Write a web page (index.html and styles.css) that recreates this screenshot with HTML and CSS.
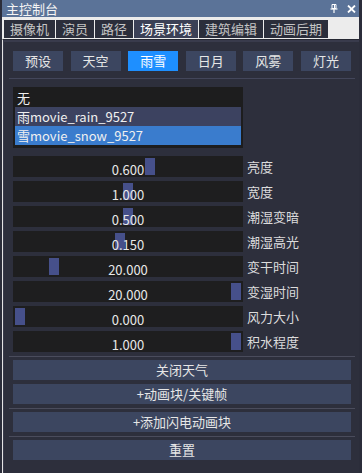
FILE: index.html
```html
<!DOCTYPE html>
<html>
<head>
<meta charset="utf-8">
<link rel="stylesheet" href="styles.css">
</head>
<body>
<div class="window">
  <div class="titlebar">
    <span class="title">主控制台</span>
    <span class="title-icons">
      <svg class="ico" width="8" height="9" viewBox="0 0 8 9"><path d="M2 0.5h4v4h-4z" fill="none" stroke="#fff" stroke-width="1"/><path d="M0.5 5h7" stroke="#fff" stroke-width="1.2"/><path d="M4 5v4" stroke="#fff" stroke-width="1.2"/><path d="M4.5 1v3.5" stroke="#fff" stroke-width="1"/></svg>
      <svg class="ico" width="9" height="8" viewBox="0 0 9 8"><path d="M1 0.5l7 7M8 0.5l-7 7" stroke="#fff" stroke-width="1.8"/></svg>
    </span>
  </div>
  <div class="tabbar">
    <div class="tab">摄像机</div>
    <div class="tab">演员</div>
    <div class="tab">路径</div>
    <div class="tab active">场景环境</div>
    <div class="tab">建筑编辑</div>
    <div class="tab">动画后期</div>
  </div>
  <div class="content">
    <div class="presets">
      <div class="pbtn">预设</div>
      <div class="pbtn">天空</div>
      <div class="pbtn active">雨雪</div>
      <div class="pbtn">日月</div>
      <div class="pbtn">风雾</div>
      <div class="pbtn">灯光</div>
    </div>
    <div class="sep sep-a"></div>
    <div class="listbox">
      <div class="item">无</div>
      <div class="item hover">雨movie_rain_9527</div>
      <div class="item selected">雪movie_snow_9527</div>
    </div>
    <div class="sliders">
      <div class="row"><div class="slider"><span class="grab" style="--f:0.6"></span><span class="val">0.600</span></div><span class="label">亮度</span></div>
      <div class="row"><div class="slider"><span class="grab" style="--f:0.5"></span><span class="val">1.000</span></div><span class="label">宽度</span></div>
      <div class="row"><div class="slider"><span class="grab" style="--f:0.5"></span><span class="val">0.500</span></div><span class="label">潮湿变暗</span></div>
      <div class="row"><div class="slider"><span class="grab" style="--f:0.463"></span><span class="val">0.150</span></div><span class="label">潮湿高光</span></div>
      <div class="row"><div class="slider"><span class="grab" style="--f:0.157"></span><span class="val">20.000</span></div><span class="label">变干时间</span></div>
      <div class="row"><div class="slider"><span class="grab" style="--f:1"></span><span class="val">20.000</span></div><span class="label">变湿时间</span></div>
      <div class="row"><div class="slider"><span class="grab" style="--f:0"></span><span class="val">0.000</span></div><span class="label">风力大小</span></div>
      <div class="row"><div class="slider"><span class="grab" style="--f:1"></span><span class="val">1.000</span></div><span class="label">积水程度</span></div>
    </div>
    <div class="sep sep-b"></div>
    <div class="btn first">关闭天气</div>
    <div class="btn gap">+动画块/关键帧</div>
    <div class="sep sep-c"></div>
    <div class="btn first">+添加闪电动画块</div>
    <div class="sep sep-c"></div>
    <div class="btn first">重置</div>
  </div>
</div>
</body>
</html>
```
FILE: styles.css
```css
html, body {
  margin: 0;
  padding: 0;
}
body {
  width: 362px;
  height: 473px;
  overflow: hidden;
  background: #2b2d3a;
  font-family: "Noto Sans CJK SC", "Noto Sans", sans-serif;
  color: #e6e6e6;
}
.window {
  margin-left: 2px;
  width: 357px;
}
.titlebar {
  height: 17px;
  background: #5b7398;
  display: flex;
  align-items: center;
  justify-content: space-between;
  padding: 0 3px 0 4px;
}
.title {
  font-size: 13px;
  line-height: 17px;
  color: #f4f4f4;
}
.title-icons {
  display: flex;
  align-items: center;
  gap: 9px;
}
.ico {
  display: block;
}
.tabbar {
  background: #ececec;
  height: 22px;
  box-sizing: border-box;
  padding: 3px 0 1px 2px;
  display: flex;
  gap: 1px;
}
.tab {
  background: #2b2e3b;
  color: #c4c4c4;
  font-size: 13px;
  line-height: 18px;
  padding: 0 6px;
}
.tab.active {
  background: #3b4056;
  color: #ffffff;
}
.content {
  background: #2d2f3c;
  border-left: 1px solid #e4e4e4;
  border-top: 1px solid #262833;
  box-shadow: inset 1px 2px 0 #393b4c;
  height: 440px;
  box-sizing: border-box;
  padding: 11px 7px 0 10px;
  margin-right: 0;
}
.presets {
  display: flex;
  justify-content: space-between;
  width: 338px;
}
.pbtn {
  width: 50px;
  height: 20px;
  background: #3c4660;
  color: #e6e6e6;
  font-size: 13px;
  line-height: 20px;
  text-align: center;
}
.pbtn.active {
  background: #1e8fff;
  color: #ffffff;
}
.sep {
  height: 1px;
  background: #4a4c5c;
  margin-left: -4px;
  width: 346px;
}
.sep-a {
  margin-top: 7px;
  background: #43465a;
}
.listbox {
  margin-top: 8px;
  width: 230px;
  height: 61px;
  box-sizing: border-box;
  background: #1d1d1e;
  padding: 1px 2px 3px;
}
.item {
  height: 19px;
  line-height: 19px;
  font-size: 13px;
  color: #f0f0f0;
  padding-left: 2px;
}
.item.hover {
  background: #3c4260;
}
.item.selected {
  background: #3a7ccd;
}
.sliders {
  margin-top: 8px;
  display: flex;
  flex-direction: column;
  gap: 4px;
}
.row {
  display: flex;
  align-items: center;
  gap: 4px;
  height: 21px;
}
.slider {
  position: relative;
  width: 230px;
  height: 21px;
  background: #1e1e1f;
  text-align: center;
}
.grab {
  position: absolute;
  top: 2px;
  bottom: 2px;
  width: 10px;
  left: calc(2px + (100% - 14px) * var(--f));
  background: #46508a;
}
.val {
  position: relative;
  font-size: 13px;
  line-height: 20px;
  color: #e8e8e8;
}
.label {
  font-size: 13px;
  color: #dcdcdc;
  line-height: 21px;
}
.sep-b {
  margin-top: 4px;
}
.sep-c {
  margin-top: 4px;
}
.btn {
  width: 338px;
  height: 20px;
  background: #3c4660;
  color: #e6e6e6;
  font-size: 13px;
  line-height: 20px;
  text-align: center;
}
.btn.first {
  margin-top: 3px;
}
.btn.gap {
  margin-top: 4px;
}
```
